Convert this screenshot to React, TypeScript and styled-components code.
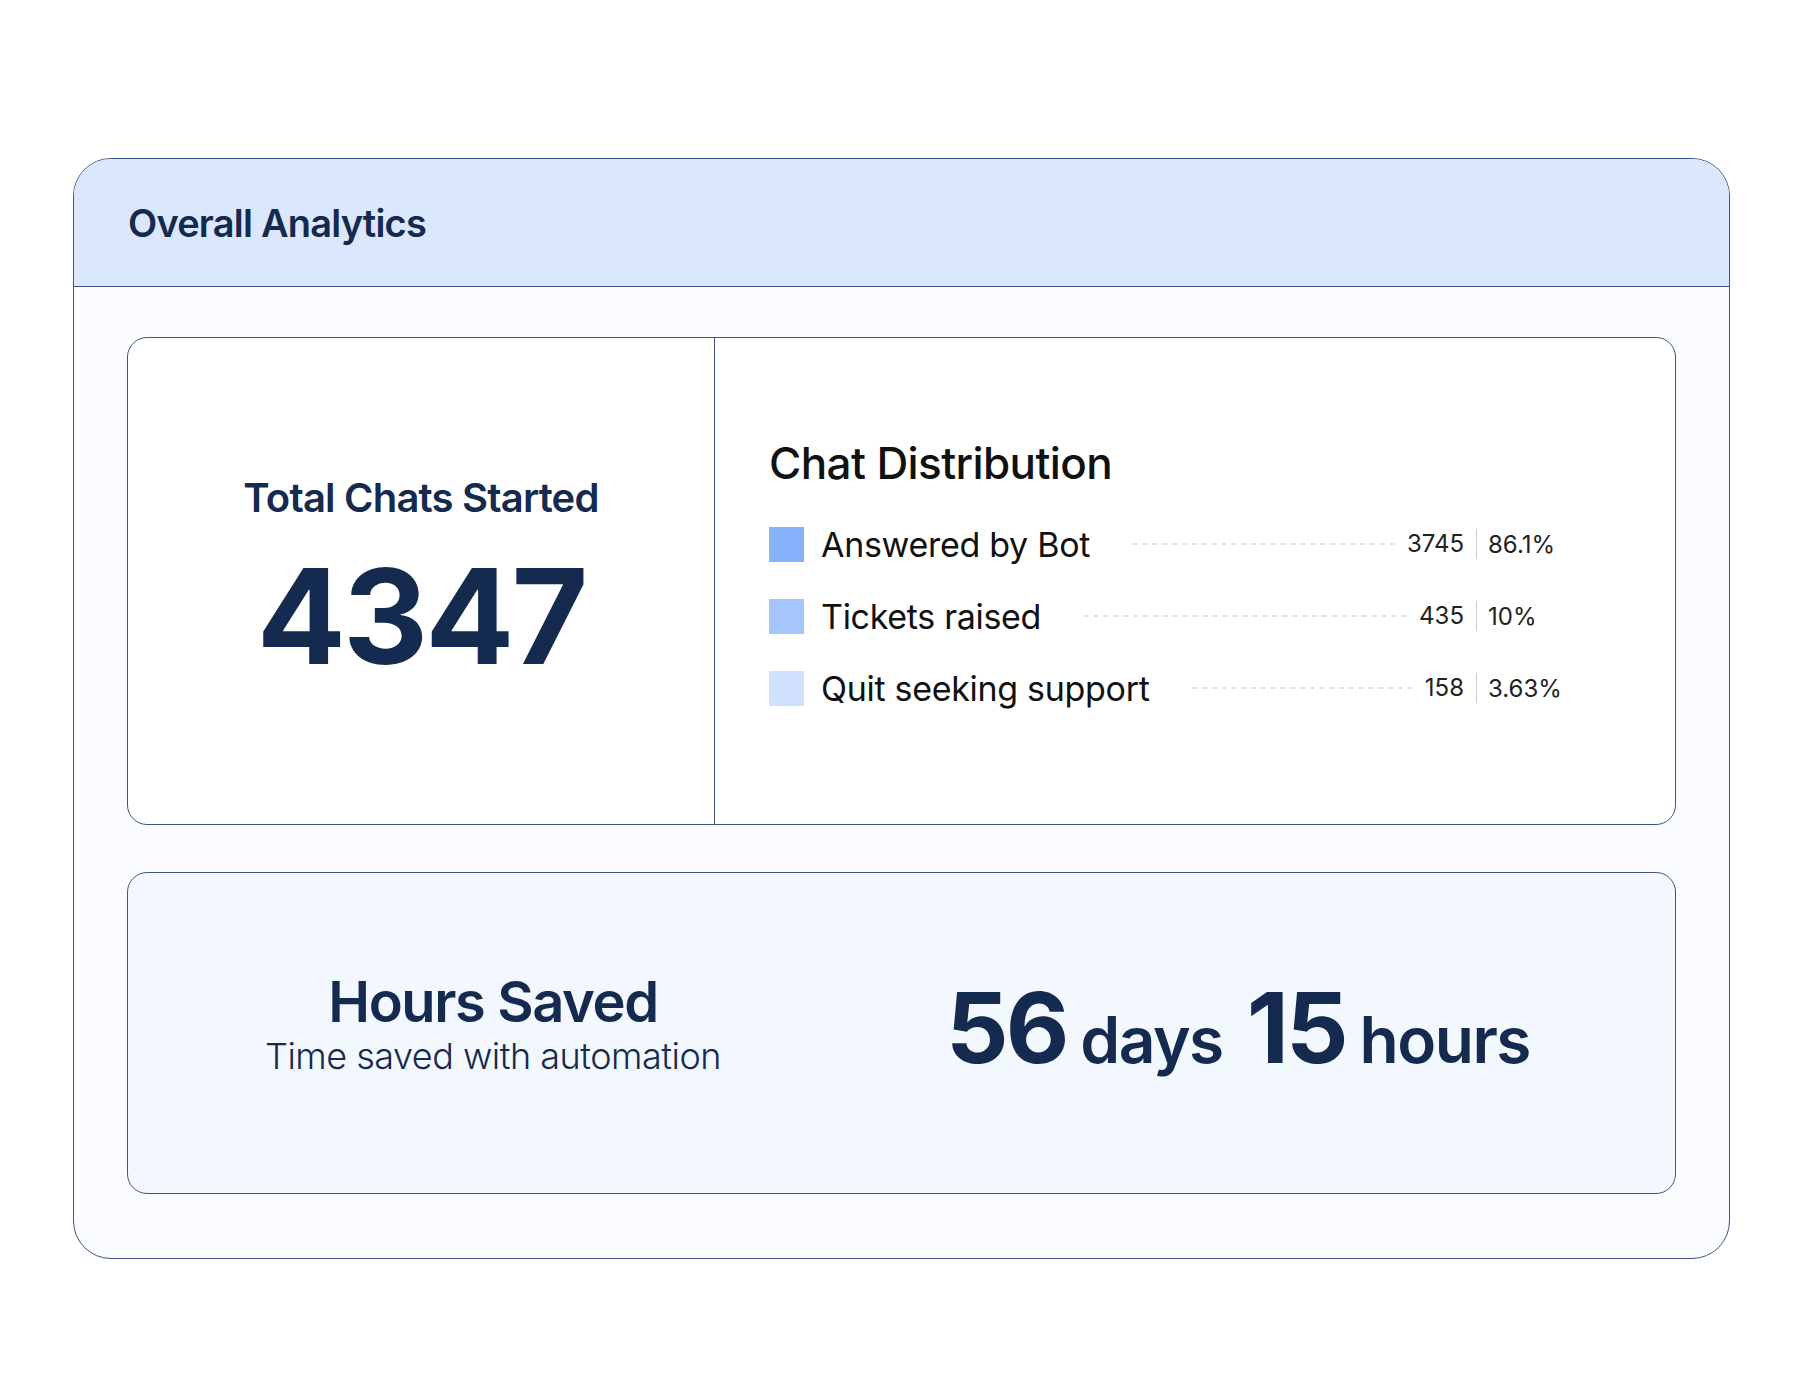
import React from "react";
import styled, { createGlobalStyle } from "styled-components";

const Global = createGlobalStyle`
  html, body { margin: 0; background: #ffffff; }
  body { font-family: Inter, "Noto Sans", sans-serif; color: #142a4e; }
`;

const Page = styled.div`
  padding: 158px 0 0 73px;
`;

const Card = styled.div`
  width: 1657px;
  box-sizing: border-box;
  border: 1.5px solid #3f5780;
  border-radius: 38px;
  background: #fbfcff;
  overflow: hidden;
  padding-bottom: 64px;
`;

const Header = styled.div`
  height: 127px;
  background: #dae7fd;
  border-bottom: 1.5px solid #3f5780;
  display: flex;
  align-items: center;
  padding-left: 54px;
`;

const Title = styled.h1`
  margin: 0;
  font-size: 38px;
  font-weight: 600;
  letter-spacing: -0.8px;
  color: #142a4e;
`;

const Body = styled.div`
  padding: 50px 53px 0 53px;
  display: flex;
  flex-direction: column;
  gap: 47px;
`;

const Panel = styled.div<{ $tint?: boolean }>`
  border: 1.5px solid #3f5780;
  border-radius: 20px;
  background: ${(p) => (p.$tint ? "#f3f7fe" : "#ffffff")};
`;

const TopPanel = styled(Panel)`
  height: 486px;
  display: grid;
  grid-template-columns: 587px 1fr;
`;

const TotalCol = styled.div`
  border-right: 1.5px solid #3f5780;
  display: flex;
  flex-direction: column;
  align-items: center;
  padding-top: 135px;
`;

const Label = styled.div`
  font-size: 40px;
  font-weight: 600;
  letter-spacing: -0.8px;
`;

const BigNum = styled.div`
  font-size: 132px;
  font-weight: 700;
  letter-spacing: -3px;
  line-height: 1;
  margin-top: 28px;
`;

const DistCol = styled.div`
  padding: 98px 0 0 54px;
`;

const DistTitle = styled.div`
  font-size: 44px;
  font-weight: 500;
  color: #111;
  letter-spacing: -0.6px;
  margin-bottom: 36px;
`;

const Rows = styled.div`
  display: flex;
  flex-direction: column;
  gap: 36px;
`;

const Row = styled.div`
  display: flex;
  align-items: center;
  height: 36px;
`;

const Left = styled.div`
  width: 708px;
  display: flex;
  align-items: center;
`;

const Swatch = styled.span<{ $c: string }>`
  width: 35px;
  height: 35px;
  background: ${(p) => p.$c};
  flex: none;
`;

const RowLabel = styled.span`
  font-size: 34px;
  color: #111;
  margin-left: 17px;
  letter-spacing: -0.3px;
`;

const Dash = styled.span`
  flex: 1;
  height: 0;
  border-top: 2px dashed #e4e4e4;
  margin: 0 12px 0 42px;
`;

const Count = styled.span`
  font-size: 24px;
  color: #222;
  padding-right: 12px;
  border-right: 1.5px solid #cfcfcf;
  line-height: 30px;
`;

const Pct = styled.span`
  font-size: 24px;
  color: #222;
  margin-left: 11px;
`;

const BottomPanel = styled(Panel)`
  height: 320px;
  display: grid;
  grid-template-columns: 730px 1fr;
  align-items: center;
`;

const SavedCol = styled.div`
  display: flex;
  flex-direction: column;
  align-items: center;
  padding-bottom: 16px;
`;

const SavedTitle = styled.div`
  font-size: 56px;
  font-weight: 600;
  letter-spacing: -1.4px;
  line-height: 1.1;
`;

const SavedSub = styled.div`
  font-size: 36px;
  font-weight: 300;
  letter-spacing: -0.5px;
`;

const Duration = styled.div`
  display: flex;
  align-items: baseline;
  padding-left: 88px;
  padding-bottom: 12px;
`;

const DurNum = styled.span`
  font-size: 98px;
  font-weight: 700;
  letter-spacing: -3px;
  margin-right: 14px;
`;

const DurUnit = styled.span`
  font-size: 64px;
  font-weight: 600;
  letter-spacing: -1.5px;
  margin-right: 24px;
`;

const rows = [
  { c: "#86b3fb", l: "Answered by Bot", n: "3745", p: "86.1%" },
  { c: "#a4c6fc", l: "Tickets raised", n: "435", p: "10%" },
  { c: "#d0e1fd", l: "Quit seeking support", n: "158", p: "3.63%" },
];

export default function App() {
  return (
    <>
      <Global />
      <Page>
        <Card>
          <Header>
            <Title>Overall Analytics</Title>
          </Header>
          <Body>
            <TopPanel>
              <TotalCol>
                <Label>Total Chats Started</Label>
                <BigNum>4347</BigNum>
              </TotalCol>
              <DistCol>
                <DistTitle>Chat Distribution</DistTitle>
                <Rows>
                  {rows.map((r) => (
                    <Row key={r.l}>
                      <Left>
                        <Swatch $c={r.c} />
                        <RowLabel>{r.l}</RowLabel>
                        <Dash />
                        <Count>{r.n}</Count>
                      </Left>
                      <Pct>{r.p}</Pct>
                    </Row>
                  ))}
                </Rows>
              </DistCol>
            </TopPanel>
            <BottomPanel $tint>
              <SavedCol>
                <SavedTitle>Hours Saved</SavedTitle>
                <SavedSub>Time saved with automation</SavedSub>
              </SavedCol>
              <Duration>
                <DurNum>56</DurNum>
                <DurUnit>days</DurUnit>
                <DurNum>15</DurNum>
                <DurUnit>hours</DurUnit>
              </Duration>
            </BottomPanel>
          </Body>
        </Card>
      </Page>
    </>
  );
}
